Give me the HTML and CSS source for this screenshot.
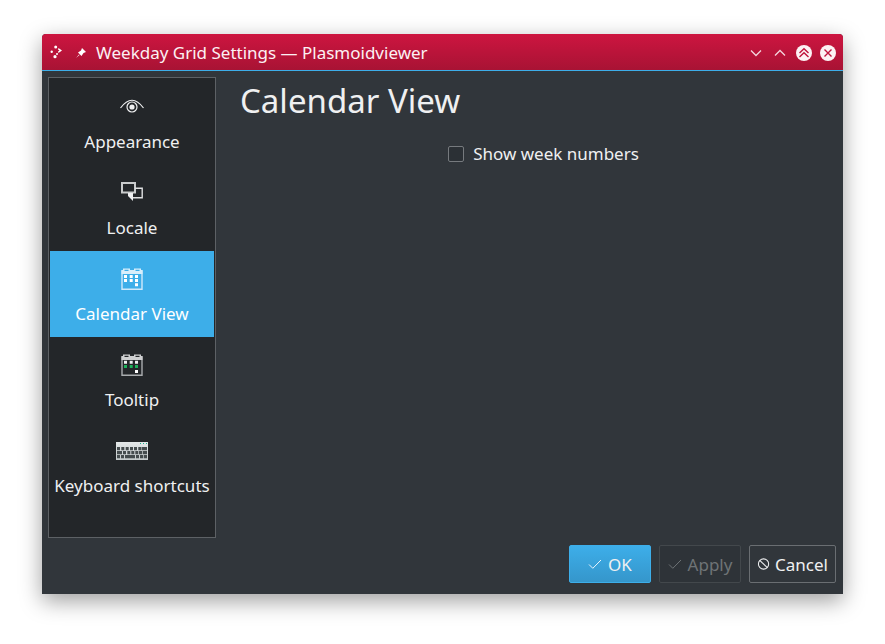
FILE: index.html
```html
<!DOCTYPE html>
<html>
<head>
<meta name="viewport" content="width=device-width, initial-scale=1.0">
<title>Weekday Grid Settings</title>
<link rel="stylesheet" href="styles.css">
</head>
<body>

<div class="window">

  <!--title bar-->
  <div class="titlebar">
    <svg class="tb-icon" width="16" height="16" viewBox="0 0 16 16">
      <circle cx="6.7" cy="2" r="1.5" fill="#fff"/>
      <path d="M9.5 3 L13 5.5 L9.5 8 L9 6.5 L10.5 5.5 L9 4.5 Z" fill="#fff"/>
      <circle cx="8" cy="9" r="1" fill="#fff"/>
      <circle cx="2.7" cy="6.7" r="1.2" fill="#fff"/>
      <circle cx="6" cy="11.7" r="1.6" fill="#fff"/>
    </svg>
    <svg class="tb-pin" width="14" height="14" viewBox="0 0 14 14">
      <path d="M8 2 L12 6 L9.5 7 L7.5 10 L4 6.5 L7 4.5 Z M5 8.5 L2 12 L5.5 9 Z" fill="#fff"/>
    </svg>
    <div class="tb-title">Weekday Grid Settings — Plasmoidviewer</div>
    <svg class="tb-btn" width="16" height="16" viewBox="0 0 16 16">
      <path d="M3 5.5 L8 10.5 L13 5.5" fill="none" stroke="#f4d6dd" stroke-width="1.3"/>
    </svg>
    <svg class="tb-btn" width="16" height="16" viewBox="0 0 16 16">
      <path d="M3 10.5 L8 5.5 L13 10.5" fill="none" stroke="#f4d6dd" stroke-width="1.3"/>
    </svg>
    <svg class="tb-btn" width="16" height="16" viewBox="0 0 16 16">
      <circle cx="8" cy="8" r="8" fill="#fcf2f4"/>
      <path d="M3.5 8 L8 3.8 L12.5 8 M3.5 12 L8 7.8 L12.5 12" fill="none" stroke="#c0143c" stroke-width="1.4"/>
    </svg>
    <svg class="tb-btn" width="16" height="16" viewBox="0 0 16 16">
      <circle cx="8" cy="8" r="8" fill="#fcf2f4"/>
      <path d="M4.5 4.5 L11.5 11.5 M11.5 4.5 L4.5 11.5" fill="none" stroke="#c0143c" stroke-width="1.4"/>
    </svg>
  </div>

  <div class="content">

    <div class="main">
      <!--the sidebar with the pages-->
      <ul class="sidebar">
        <li class="page">
          <svg width="24" height="22" viewBox="0 0 24 22">
            <path d="M0.5 12 Q12 -3.5 23.5 12" fill="none" stroke="#eff0f1" stroke-width="1.2"/>
            <circle cx="12" cy="11" r="5" fill="none" stroke="#eff0f1" stroke-width="1.2"/>
            <circle cx="12" cy="11" r="2.6" fill="#eff0f1"/>
          </svg>
          <span>Appearance</span>
        </li>
        <li class="page">
          <svg width="24" height="22" viewBox="0 0 24 22">
            <path d="M2 1 H15 V10.5 H2 Z" fill="none" stroke="#c9cbcc" stroke-width="2"/>
            <path d="M8 11 H13 V19 L8 14 Z" fill="#eff0f1"/>
            <path d="M15 6.3 H22.2 V15.8 H13" fill="none" stroke="#dfe0e1" stroke-width="1.4"/>
          </svg>
          <span>Locale</span>
        </li>
        <li class="page active">
          <svg width="24" height="22" viewBox="0 0 24 22">
            <path d="M2 3 H22 V21.3 H2 Z" fill="none" stroke="#cfe9fa" stroke-width="1.4"/>
            <rect x="1.5" y="2" width="21" height="4" fill="#d8eefb"/>
            <path d="M3 1.2 H10 M14 1.2 H21" stroke="#d8eefb" stroke-width="1.4"/>
            <path d="M4.5 2.4 H8.5 M15.5 2.4 H19.5" stroke="#3daee9" stroke-width="1.2"/>
            <path d="M4 7 h3 v3 h-3 z M9.7 7 h3 v3 h-3 z M15 7 h3 v3 h-3 z M4 11 h3 v3 h-3 z M9.7 11 h3 v3 h-3 z M15 11 h3 v3 h-3 z M15 15.3 h3 v3 h-3 z" fill="#fff"/>
          </svg>
          <span>Calendar View</span>
        </li>
        <li class="page">
          <svg width="24" height="22" viewBox="0 0 24 22">
            <path d="M2 3 H22 V21.3 H2 Z" fill="none" stroke="#a9acae" stroke-width="1.4"/>
            <rect x="1.5" y="2" width="21" height="4" fill="#cfd0d1"/>
            <path d="M3 1.2 H10 M14 1.2 H21" stroke="#cfd0d1" stroke-width="1.4"/>
            <path d="M4.5 2.4 H8.5 M15.5 2.4 H19.5" stroke="#232629" stroke-width="1.2"/>
            <path d="M4 6.7 h3 v3 h-3 z M9.7 6.7 h3 v3 h-3 z M15 6.7 h3 v3 h-3 z" fill="#eff0f1"/>
            <path d="M4 11 h3 v3 h-3 z M9.7 11 h3 v3 h-3 z M15 11 h3 v3 h-3 z" fill="#1cb05a"/>
            <path d="M15 16 h3 v3 h-3 z" fill="#fff"/>
          </svg>
          <span>Tooltip</span>
        </li>
        <li class="page">
          <svg width="32" height="18" viewBox="0 0 32 18">
            <defs>
              <linearGradient id="kb" x1="0" y1="0" x2="0" y2="1">
                <stop offset="0" stop-color="#e4e8e9"/>
                <stop offset="1" stop-color="#c3c9ca"/>
              </linearGradient>
            </defs>
            <rect width="32" height="18" fill="url(#kb)"/>
            <path d="M1 5 h3 v3.3 h-3 z M5.3 5 h3 v3.3 h-3 z M9.7 5 h3 v3.3 h-3 z M14 5 h3 v3.3 h-3 z M18 5 h3 v3.3 h-3 z M22.3 5 h2.7 v3.3 h-2.7 z M25.5 5 h5.5 v3.3 h-5.5 z M1 9 h5 v3.3 h-5 z M7 9 h3 v3.3 h-3 z M11.3 9 h3 v3.3 h-3 z M15.3 9 h3 v3.3 h-3 z M19.3 9 h3 v3.3 h-3 z M23 9 h3 v3.3 h-3 z M26.7 9 h4.3 v3.3 h-4.3 z M1 13 h3 v3.3 h-3 z M5 13 h3 v3.3 h-3 z M9 13 h10 v3.3 h-10 z M20 13 h3 v3.3 h-3 z M24 13 h3 v3.3 h-3 z M27.7 13 h3.3 v3.3 h-3.3 z" fill="#454c4e"/>
            <path d="M24 1 h1 v1 h-1 z M27 1 h1 v1 h-1 z M30 1 h1 v1 h-1 z" fill="#1cb08a"/>
          </svg>
          <span>Keyboard shortcuts</span>
        </li>
      </ul>

      <!--the current page-->
      <div class="panel">
        <h1>Calendar View</h1>
        <label class="check">
          <span class="box"></span>
          Show week numbers
        </label>
      </div>
    </div>

    <!--dialog buttons-->
    <div class="buttons">
      <div class="btn btn-ok">
        <svg width="14" height="14" viewBox="0 0 14 14"><path d="M1 7.5 L4.8 11.3 L13 3" fill="none" stroke="#eaf5fd" stroke-width="1"/></svg>
        OK
      </div>
      <div class="btn btn-off">
        <svg width="14" height="14" viewBox="0 0 14 14"><path d="M1 7.5 L4.8 11.3 L13 3" fill="none" stroke="#6e7376" stroke-width="1"/></svg>
        Apply
      </div>
      <div class="btn btn-cancel">
        <svg width="14" height="14" viewBox="0 0 14 14"><circle cx="7" cy="7" r="5.5" fill="none" stroke="#eff0f1" stroke-width="1.1"/><path d="M3 3 L11 11" stroke="#eff0f1" stroke-width="1.1"/></svg>
        Cancel
      </div>
    </div>

  </div>
</div>

</body>
</html>
```

FILE: styles.css
```css
* {box-sizing: border-box;}

body{
  margin:0px;
  padding:34px 0px 50px 42px;
  background:#fff;
  font-family:"Noto Sans", sans-serif;
  font-size:17px;
  color:#eff0f1;
}

.window{
  width:801px;
  height:560px;
  background:#31363b;
  border-radius:4px 4px 0px 0px;
  box-shadow:0px 7px 22px rgba(0,0,0,0.38);
  display:flex;
  flex-direction:column;
}

/*title bar*/

.titlebar{
  height:37px;
  flex:none;
  display:flex;
  align-items:center;
  padding:1px 7px 0px 7px;
  background:linear-gradient(#cd1540, #a81334);
  border-bottom:1px solid #3daee9;
  border-radius:4px 4px 0px 0px;
}

.tb-icon{
  margin-right:9px;
}

.tb-pin{
  margin-right:8px;
}

.tb-title{
  flex:1;
  color:#fcf0f3;
}

.tb-btn{
  margin-left:8px;
}

/*content*/

.content{
  flex:1;
  display:flex;
  flex-direction:column;
  padding:6px 7px 11px 6px;
}

.main{
  height:461px;
  display:flex;
}

.sidebar{
  width:168px;
  margin:0px;
  padding:1px;
  list-style:none;
  background:#232629;
  border:1px solid #5d6165;
}

.page{
  height:86px;
  display:flex;
  flex-direction:column;
  align-items:center;
  padding-top:17px;
}

.page svg{
  height:22px;
  flex:none;
}

.page span{
  margin-top:13px;
  line-height:22px;
  white-space:nowrap;
}

.page.active{
  background:#3daee9;
  color:#fff;
}

.panel{
  flex:1;
  padding-left:24px;
}

.panel h1{
  margin:0px;
  padding-top:1px;
  font-size:33px;
  font-weight:400;
  line-height:46px;
}

.check{
  display:flex;
  align-items:center;
  justify-content:center;
  gap:9px;
  margin-top:19px;
  margin-left:11px;
  line-height:22px;
}

.box{
  width:16px;
  height:16px;
  background:#2b3035;
  border:1px solid #767a7e;
  border-radius:2px;
}

/*buttons*/

.buttons{
  display:flex;
  justify-content:flex-end;
  gap:8px;
  margin-top:7px;
}

.btn{
  height:38px;
  padding:0px 7px;
  display:flex;
  align-items:center;
  gap:6px;
  border:1px solid #6a6e72;
  border-radius:2px;
  background:#31363b;
}

.btn-ok{
  width:82px;
  justify-content:center;
  background:linear-gradient(#3daee9, #3596cb);
  border-color:#3daee9;
}

.btn-off{
  width:82px;
  justify-content:center;
  color:#6e7376;
  background:#2e3338;
  border-color:#43484c;
}

.btn-cancel{
  width:87px;
  gap:5px;
  white-space:nowrap;
}
```
